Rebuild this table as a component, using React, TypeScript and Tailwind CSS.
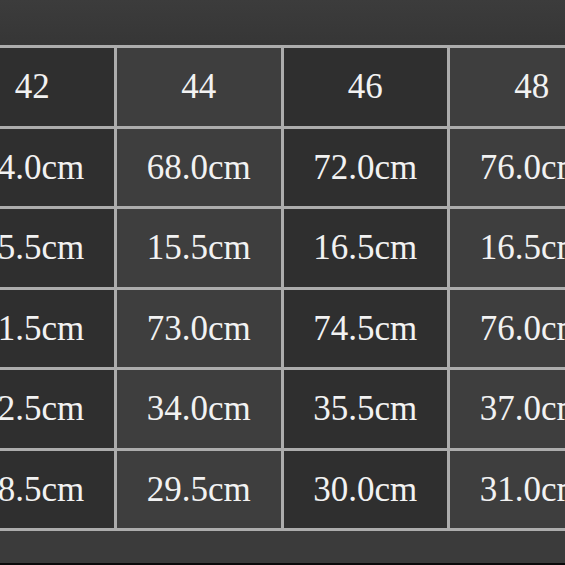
import React from "react";

const rows: string[][] = [
  ["42", "44", "46", "48"],
  ["64.0cm", "68.0cm", "72.0cm", "76.0cm"],
  ["15.5cm", "15.5cm", "16.5cm", "16.5cm"],
  ["71.5cm", "73.0cm", "74.5cm", "76.0cm"],
  ["32.5cm", "34.0cm", "35.5cm", "37.0cm"],
  ["28.5cm", "29.5cm", "30.0cm", "31.0cm"],
];

export default function App() {
  return (
    <div
      className="w-[565px] h-[565px] overflow-hidden bg-[#3a3a3a] flex flex-col"
      style={{ fontFamily: '"Liberation Serif", "DejaVu Serif", serif' }}
    >
      <div className="h-[45px] shrink-0 bg-gradient-to-b from-[#3c3c3c] to-[#363636]" />
      <div className="ml-[-52.5px] w-max grid grid-cols-[repeat(4,163.5px)] auto-rows-[77.5px] gap-[3px] p-[3px] bg-[#acacac] shrink-0">
        {rows.map((r, ri) =>
          r.map((c, ci) => (
            <div
              key={`${ri}-${ci}`}
              className={`flex items-center justify-center text-[35px] leading-none text-[#f2f2f2] ${
                ci % 2 === 0 ? "bg-[#2f2f2f]" : "bg-[#3e3e3e]"
              }`}
            >
              {c}
            </div>
          ))
        )}
      </div>
      <div className="flex-1 bg-[#3b3b3b]" />
      <div className="h-[2px] bg-[#0a0a0a]" />
    </div>
  );
}
